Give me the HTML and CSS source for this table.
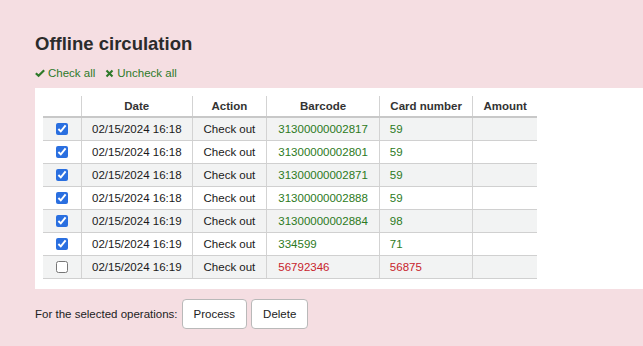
FILE: index.html
```html
<!DOCTYPE html>
<html>
<head>
<meta charset="utf-8">
<link rel="stylesheet" href="styles.css">
</head>
<body>
<div class="main">
  <h1 class="title">Offline circulation</h1>
  <div class="checklinks">
    <a class="link"><svg class="ico" viewBox="0 0 12 12" width="10" height="10"><path d="M1 6.2 L4.3 9.4 L11 2.6" fill="none" stroke="currentColor" stroke-width="2.6"/></svg>Check all</a>
    <a class="link"><svg class="ico" viewBox="0 0 12 12" width="9" height="9"><path d="M2 2 L10 10 M10 2 L2 10" fill="none" stroke="currentColor" stroke-width="2.8"/></svg>Uncheck all</a>
  </div>
  <div class="panel">
    <table class="ops">
      <thead>
        <tr><th class="cb"></th><th>Date</th><th>Action</th><th>Barcode</th><th class="card">Card number</th><th>Amount</th></tr>
      </thead>
      <tbody>
        <tr><td class="cb"><input type="checkbox" checked></td><td>02/15/2024 16:18</td><td class="act">Check out</td><td class="ok bc">31300000002817</td><td class="ok">59</td><td></td></tr>
        <tr><td class="cb"><input type="checkbox" checked></td><td>02/15/2024 16:18</td><td class="act">Check out</td><td class="ok bc">31300000002801</td><td class="ok">59</td><td></td></tr>
        <tr><td class="cb"><input type="checkbox" checked></td><td>02/15/2024 16:18</td><td class="act">Check out</td><td class="ok bc">31300000002871</td><td class="ok">59</td><td></td></tr>
        <tr><td class="cb"><input type="checkbox" checked></td><td>02/15/2024 16:18</td><td class="act">Check out</td><td class="ok bc">31300000002888</td><td class="ok">59</td><td></td></tr>
        <tr><td class="cb"><input type="checkbox" checked></td><td>02/15/2024 16:19</td><td class="act">Check out</td><td class="ok bc">31300000002884</td><td class="ok">98</td><td></td></tr>
        <tr><td class="cb"><input type="checkbox" checked></td><td>02/15/2024 16:19</td><td class="act">Check out</td><td class="ok bc">334599</td><td class="ok">71</td><td></td></tr>
        <tr><td class="cb"><input type="checkbox"></td><td>02/15/2024 16:19</td><td class="act">Check out</td><td class="bad bc">56792346</td><td class="bad">56875</td><td></td></tr>
      </tbody>
    </table>
  </div>
  <div class="actions">
    <span class="label">For the selected operations:</span>
    <button class="btn">Process</button>
    <button class="btn">Delete</button>
  </div>
</div>
</body>
</html>
```
FILE: styles.css
```css
html, body {
  margin: 0;
  padding: 0;
  background: #f5dee2;
  font-family: "Liberation Sans", Arial, sans-serif;
  color: #222;
}
.main {
  padding: 33px 0 0 35px;
}
.title {
  margin: 0;
  font-size: 18.5px;
  line-height: 22px;
  font-weight: bold;
  color: #2b2b2b;
}
.checklinks {
  margin-top: 11px;
  font-size: 11.5px;
  line-height: 14px;
  display: flex;
  gap: 10px;
}
.link {
  color: #2e7a2a;
  display: inline-flex;
  align-items: center;
  gap: 3px;
}
.ico {
  display: block;
}
.panel {
  margin-top: 8px;
  background: #fff;
  padding: 8px 8px 10px 8px;
}
.ops {
  border-collapse: collapse;
  font-size: 11.5px;
}
.ops th {
  font-weight: bold;
  color: #333;
  height: 20px;
  padding: 0 10px;
  text-align: center;
  border-bottom: 2px solid #c8c8c8;
}
.ops th.card {
  padding: 0 10.5px;
}
.ops td {
  height: 22px;
  padding: 0 10px;
  border-bottom: 1px solid #d0d0d0;
  color: #1a1a1a;
}
.ops th + th, .ops td + td {
  border-left: 1px solid #d3d3d3;
}
.ops tbody tr:nth-child(odd) td {
  background: #f2f3f3;
}
.ops .cb {
  width: 18px;
  text-align: center;
}
.ops td.cb input {
  margin: 0;
  width: 12px;
  height: 12px;
  vertical-align: middle;
  accent-color: #2a6fe0;
}
.ops td.act {
  text-align: center;
  padding: 0 11px;
}
.ops td.bc {
  padding: 0 11px;
}
.ops td.ok {
  color: #2c7a22;
}
.ops td.bad {
  color: #c8232c;
}
.actions {
  margin-top: 10px;
  display: flex;
  align-items: center;
  gap: 4px;
  font-size: 11.5px;
}
.label {
  color: #222;
}
.btn {
  height: 30px;
  padding: 0 11px;
  background: #fff;
  border: 1px solid #b9b9b9;
  border-radius: 4px;
  font-family: "Liberation Sans", Arial, sans-serif;
  font-size: 11.5px;
  color: #222;
}
```
